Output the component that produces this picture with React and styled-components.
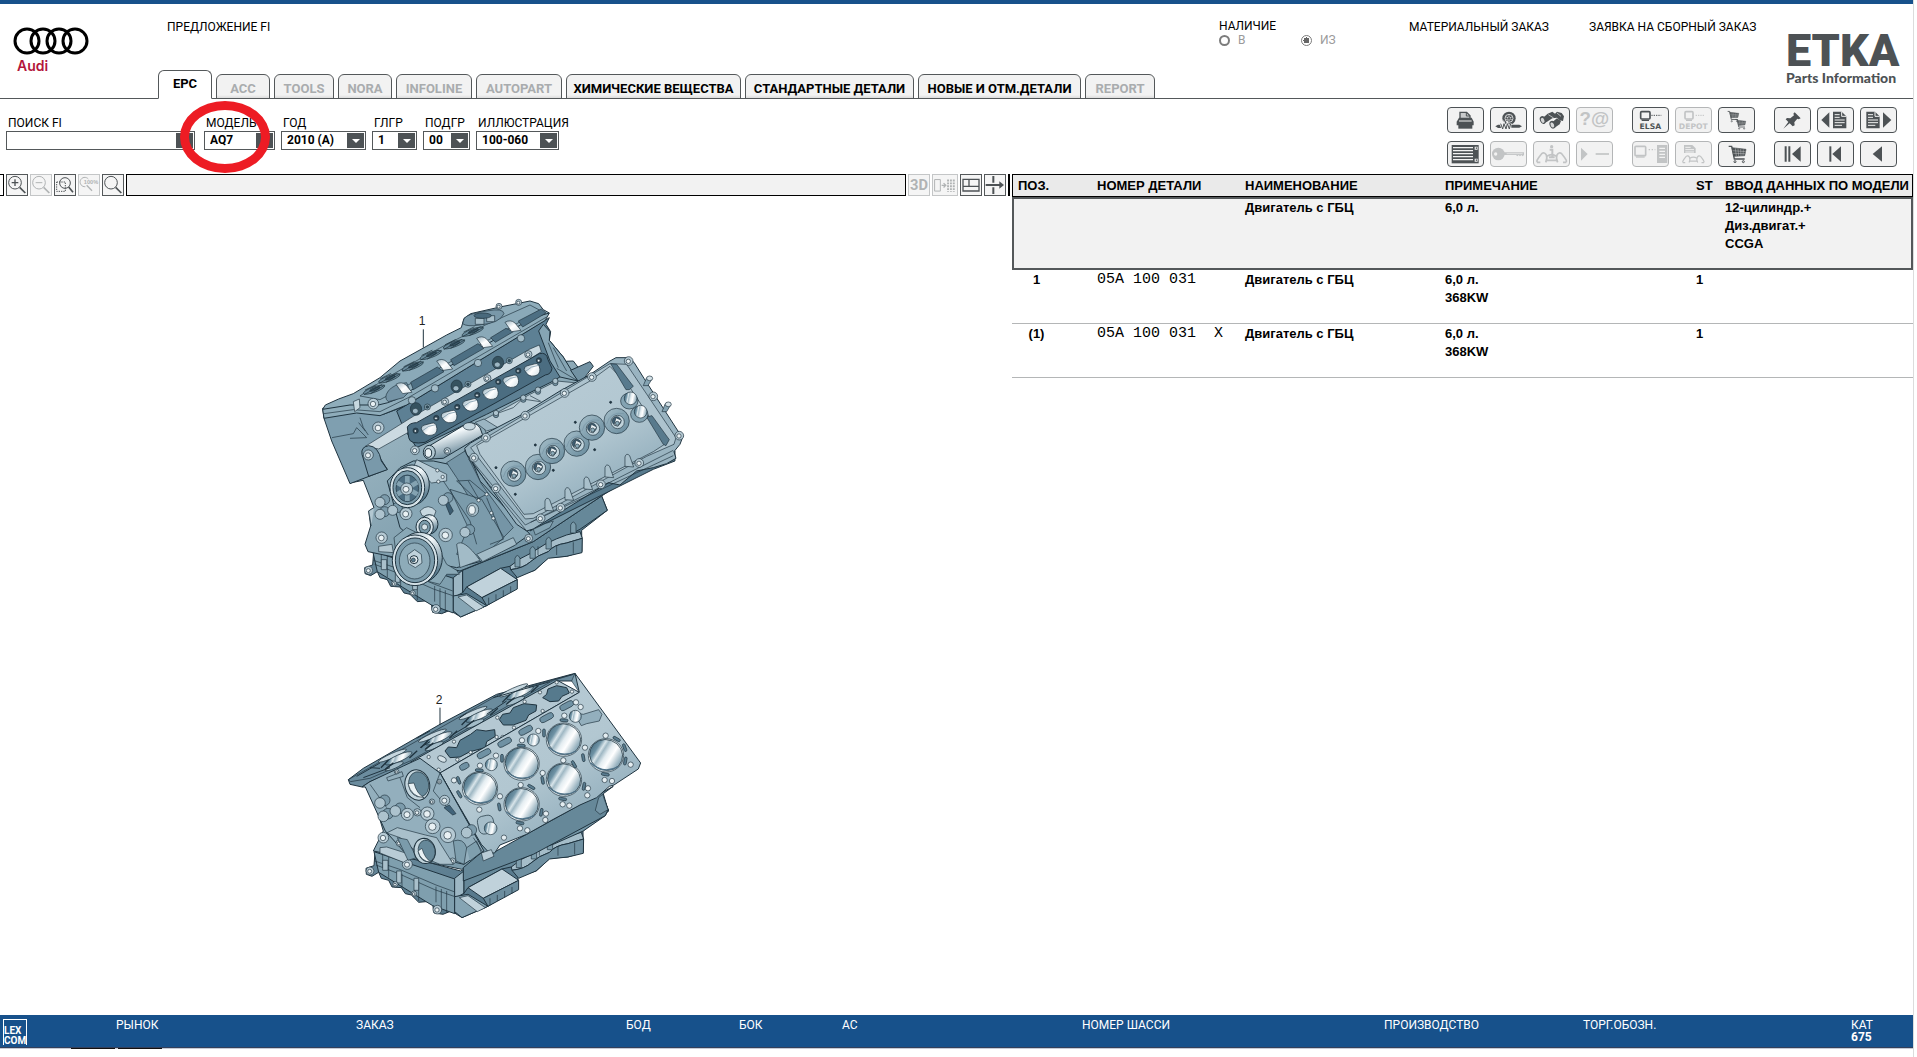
import React, { useState } from 'react';
import styled, { createGlobalStyle, css } from 'styled-components';

const tabs = [
  { name: "EPC", width: 54 },
  { name: "ACC", width: 54, disabled: true },
  { name: "TOOLS", width: 60, disabled: true },
  { name: "NORA", width: 54, disabled: true },
  { name: "INFOLINE", width: 76, disabled: true },
  { name: "AUTOPART", width: 86, disabled: true },
  { name: "ХИМИЧЕСКИЕ ВЕЩЕСТВА", width: 175 },
  { name: "СТАНДАРТНЫЕ ДЕТАЛИ", width: 169 },
  { name: "НОВЫЕ И ОТМ.ДЕТАЛИ", width: 163 },
  { name: "REPORT", width: 70, disabled: true },
];

const filters = [
  { id: "model", label: "МОДЕЛЬ", value: "AQ7", width: 71, marked: true },
  { id: "year", label: "ГОД", value: "2010 (A)", width: 85 },
  { id: "group", label: "ГЛГР", value: "1", width: 45 },
  { id: "subgroup", label: "ПОДГР", value: "00", width: 47 },
  { id: "picture", label: "ИЛЛЮСТРАЦИЯ", value: "100-060", width: 83 },
];

const parts = [
  { pos: "", number: "", name: "Двигатель с ГБЦ", note: ["6,0 л."], st: "", model: ["12-цилиндр.+", "Диз.двигат.+", "CCGA"] },
  { pos: "1", number: "05A 100 031", name: "Двигатель с ГБЦ", note: ["6,0 л.", "368KW"], st: "1", model: [] },
  { pos: "(1)", number: "05A 100 031  X", name: "Двигатель с ГБЦ", note: ["6,0 л.", "368KW"], st: "1", model: [] },
];

const footerItems = ["РЫНОК", "ЗАКАЗ", "БОД", "БОК", "АС", "НОМЕР ШАССИ", "ПРОИЗВОДСТВО", "ТОРГ.ОБОЗН."];

const IconText = styled.text`
  fill: currentColor;
  text-anchor: middle;
  font-family: ${(props) => (props.$wide ? '"DejaVu Sans"' : props.$narrow ? 'Roboto' : '"Liberation Sans"')}, sans-serif;
  font-size: ${(props) => props.$size}px;
  font-weight: bold;
`;

/* ---------- toolbar icons, drawn on a 111 x 78 grid ---------- */

const Doc = ({ x = 0, y = 0 }) => (
  <g transform={`translate(${x} ${y})`}>
    <path d="M0 0H26L40 14V50H0Z" fill="currentColor" />
    <path d="M26 0V14H40" fill="none" stroke="#f2f2f2" strokeWidth="3" />
    <path d="M5 9H20M5 17H20M5 25H35M5 33H35M5 41H27" stroke="#f2f2f2" strokeWidth="3" />
  </g>
);

const Cart = ({ x = 0, y = 0, s = 1 }) => (
  <g transform={`translate(${x} ${y}) scale(${s})`} fill="none" stroke="currentColor">
    <path d="M0 2H9L17 40H48" strokeWidth="4" />
    <path d="M10 6L52 11L48 30L16 32Z" fill="currentColor" strokeWidth="2" />
    <path d="M20 8L23 31M28 9L30 31M36 10L37 31M44 11L43 30M12 15L51 18M14 23L49 24" stroke="#f2f2f2" strokeWidth="1" />
    <circle cx="19" cy="48" r="3" strokeWidth="3" />
    <circle cx="44" cy="48" r="3" strokeWidth="3" />
  </g>
);

const Screen = ({ x, y, w = 28, h = 22 }) => (
  <g transform={`translate(${x} ${y})`}>
    <rect x="2" y="2" width={w} height={h} rx="3" fill="none" stroke="currentColor" strokeWidth="5" />
    <path d={`M5 ${h + 6}H${w - 1}`} stroke="currentColor" strokeWidth="4" />
  </g>
);

const Hands = ({ x = 0, y = 0, s = 1 }) => (
  <g transform={`translate(${x} ${y}) scale(${s})`} fill="none" stroke="currentColor" strokeWidth="5">
    <path d="M2 40V34Q6 26 16 14Q24 8 30 18Q34 28 28 40" />
    <path d="M90 40V34Q86 26 76 14Q68 8 62 18Q58 28 64 40" />
    <path d="M2 40H12M80 40H90M31 22Q46 12 61 22M30 34H62" />
  </g>
);

const icons = {
  print: (
    <>
      <path d="M39 16H59L69 26V36H39Z" fill="#c9cbcc" stroke="currentColor" strokeWidth="4" />
      <path d="M58 16V27H69" fill="none" stroke="currentColor" strokeWidth="3" />
      <path d="M29 44L36 32H74L80 44V55H29Z" fill="currentColor" />
      <path d="M36 42H74" stroke="#f2f2f2" strokeWidth="3" />
      <path d="M34 52H76V65H34Z" fill="currentColor" />
    </>
  ),
  wheel: (
    <>
      <circle cx="57" cy="34" r="20" fill="currentColor" />
      <circle cx="57" cy="34" r="12" fill="none" stroke="#d5d6d7" strokeWidth="3" />
      <path d="M57 25V43M49 30L65 38M49 38L65 30" stroke="#d5d6d7" strokeWidth="3" />
      <circle cx="57" cy="34" r="3" fill="currentColor" />
      <path d="M16 58L24 53H34V63H24Z" fill="currentColor" />
      <path d="M32 50L38 66L42 50L48 66L52 50L58 66L62 50L66 66" fill="none" stroke="#f2f2f2" strokeWidth="7" />
      <path d="M32 50L38 66L42 50L48 66L52 50L58 66L62 50" fill="none" stroke="currentColor" strokeWidth="3" />
      <path d="M64 53H88L96 58L88 62H64Z" fill="currentColor" />
    </>
  ),
  find: (
    <>
      <path d="M44 20L58 14L66 20L72 14L86 18L93 28L90 42L80 40L72 32L58 34L40 46L30 32Z" fill="currentColor" />
      <path d="M52 50L72 34L84 42L80 52L68 60Z" fill="currentColor" />
      <ellipse cx="30" cy="39" rx="9" ry="12" transform="rotate(-24 30 39)" fill="currentColor" />
      <ellipse cx="29" cy="40" rx="5" ry="8" transform="rotate(-24 29 40)" fill="#d5d6d7" />
      <ellipse cx="59" cy="53" rx="9" ry="12" transform="rotate(-24 59 53)" fill="currentColor" />
      <ellipse cx="58" cy="54" rx="5" ry="8" transform="rotate(-24 58 54)" fill="#d5d6d7" />
      <path d="M46 23L62 33M72 18L84 28" stroke="#f2f2f2" strokeWidth="2" />
    </>
  ),
  mail: <IconText x="55" y="55" $size={56}>?@</IconText>,
  elsa: (
    <>
      <Screen x={24} y={12} />
      <path d="M58 25H88" stroke="currentColor" strokeWidth="3" strokeDasharray="4 3" />
      <IconText x="55" y="66" $size={23} $wide>ELSA</IconText>
    </>
  ),
  depot: (
    <>
      <Screen x={28} y={12} w={24} />
      <path d="M62 25H88" stroke="currentColor" strokeWidth="3" strokeDasharray="4 3" />
      <IconText x="55" y="66" $size={23} $wide>DEPOT</IconText>
    </>
  ),
  carts: (
    <>
      <Cart x={29} y={12} s={0.64} />
      <Cart x={52} y={36} s={0.6} />
    </>
  ),
  pin: (
    <path d="M62 16L80 34L74 37L70 35L61 46L62 55L56 58L47 49L28 65L43 45L35 37L39 33L49 34L60 25L58 20Z" fill="currentColor" />
  ),
  docPrev: (
    <>
      <path d="M37 16V62L13 39Z" fill="currentColor" />
      <Doc x={48} y={14} />
    </>
  ),
  docNext: (
    <>
      <Doc x={19} y={14} />
      <path d="M69 16V62L94 39Z" fill="currentColor" />
    </>
  ),
  list: (
    <>
      <path d="M14 12H95V67H14Z" fill="currentColor" />
      <path d="M18 20H78M18 29H78M18 38H78M18 47H78M18 56H78" stroke="#f2f2f2" strokeWidth="4" />
      <path d="M83 17H92V26H83ZM83 53H92V62H83Z" fill="#f2f2f2" />
      <path d="M88 19V24M88 55V60" stroke="currentColor" strokeWidth="3" />
    </>
  ),
  key: (
    <>
      <circle cx="25" cy="39" r="19" fill="currentColor" />
      <circle cx="17" cy="39" r="5" fill="#f2f2f2" />
      <path d="M42 34H102V42L98 46L94 42L90 46L86 42L82 46L78 42H42Z" fill="currentColor" />
      <path d="M50 38H98" stroke="#f2f2f2" strokeWidth="2" />
    </>
  ),
  info: (
    <>
      <Hands x={10} y={24} />
      <circle cx="56" cy="17" r="5" fill="currentColor" />
      <path d="M50 26H58V48M48 49H65" fill="none" stroke="currentColor" strokeWidth="6" />
    </>
  ),
  expand: (
    <>
      <path d="M15 20V59L35 39Z" fill="currentColor" />
      <path d="M59 39H99" stroke="currentColor" strokeWidth="5" />
    </>
  ),
  server: (
    <>
      <Screen x={7} y={14} w={32} h={28} />
      <path d="M50 26H70" stroke="currentColor" strokeWidth="4" strokeDasharray="4 5" />
      <path d="M75 12H106V66H75Z" fill="currentColor" />
      <path d="M82 22H99M82 31H99M82 40H99M82 49H99" stroke="#f2f2f2" strokeWidth="4" />
    </>
  ),
  docCar: (
    <>
      <path d="M27 12H52L62 22V36H27Z" fill="currentColor" />
      <path d="M31 19H47M31 26H57M31 33H57" stroke="#f2f2f2" strokeWidth="3" />
      <Hands x={22} y={36} s={0.72} />
    </>
  ),
  cart: <Cart x={32} y={14} />,
  first: (
    <>
      <path d="M35 16V62M46 16V62" stroke="currentColor" strokeWidth="6" />
      <path d="M80 16V62L54 39Z" fill="currentColor" />
    </>
  ),
  prev: (
    <>
      <path d="M40 16V62" stroke="currentColor" strokeWidth="6" />
      <path d="M72 16V62L46 39Z" fill="currentColor" />
    </>
  ),
  back: <path d="M66 16V62L38 39Z" fill="currentColor" />,
};

const toolGroups = [
  [
    ["print", "Печать"], ["wheel", "Колёса"], ["find", "Поиск"], ["mail", "Запрос", true],
    ["list", "Список"], ["key", "Ключ", true], ["info", "Информация", true], ["expand", "Развернуть", true],
  ],
  [
    ["elsa", "ELSA"], ["depot", "DEPOT", true], ["carts", "Корзины"],
    ["server", "Сервер", true], ["docCar", "Документ", true], ["cart", "Корзина"],
  ],
  [
    ["pin", "Закрепить"], ["docPrev", "Предыдущий документ"], ["docNext", "Следующий документ"],
    ["first", "В начало"], ["prev", "Предыдущий"], ["back", "Назад"],
  ],
];

/* ---------- viewer icons, 66 x 66 grid ---------- */

const Lens = ({ children }) => (
  <g fill="none" stroke="currentColor">
    <circle cx="27" cy="26" r="19" strokeWidth="3" />
    <path d="M41 40L58 57" strokeWidth="5" />
    {children}
  </g>
);

const viewIcons = {
  zoomIn: <Lens><path d="M17 26H37M27 16V36" strokeWidth="4" /></Lens>,
  zoomOut: <Lens><path d="M17 26H37" strokeWidth="3" /></Lens>,
  zoomArea: (
    <g fill="none" stroke="currentColor">
      <path d="M8 24H34V52H8Z" strokeWidth="3" strokeDasharray="4 3" />
      <circle cx="33" cy="27" r="16" strokeWidth="3" />
      <path d="M44 39L57 55" strokeWidth="5" />
    </g>
  ),
  zoomFull: (
    <g fill="none" stroke="currentColor">
      <path d="M22 38A14 14 0 1 1 31 15" strokeWidth="3" />
      <path d="M26 34L42 50" strokeWidth="4" />
      <IconText x="39" y="31" $size={17} stroke="none">100%</IconText>
    </g>
  ),
  zoom: <Lens />,
  three: <IconText x="33" y="49" $size={44} $narrow>3D</IconText>,
  split: (
    <g fill="none" stroke="currentColor">
      <path d="M8 16H26V52H8Z" strokeWidth="3" />
      <path d="M30 34H42M36 27L43 34L36 41" strokeWidth="4" />
      <path d="M50 16V54M59 16V54M68 16V54" strokeWidth="6" strokeDasharray="6 3" />
    </g>
  ),
  panes: <path d="M9 16H57V51H9ZM9 37H57M27 16V37" fill="none" stroke="currentColor" strokeWidth="4" />,
  move: (
    <g stroke="currentColor" fill="currentColor">
      <path d="M28 6V26M28 40V60" strokeWidth="6" />
      <path d="M5 33H48" strokeWidth="6" />
      <path d="M46 22L60 33L46 44Z" stroke="none" />
    </g>
  ),
};

const ViewButton = ({ icon, title, disabled, wide }) => (
  <SquareButton type="button" aria-label={title} disabled={disabled} $wide={wide}>
    <svg viewBox={wide ? "3 3 75 60" : "3 3 60 60"}>{viewIcons[icon]}</svg>
  </SquareButton>
);

/* ---------- engine drawings ---------- */

const ink = "#1f333f";

const Gradients = () => (
  <defs>
    <linearGradient id="metal" x1="0" y1="0.1" x2="1" y2="0.3">
      <stop offset="0" stopColor="#466a7e" />
      <stop offset="0.22" stopColor="#6f93a5" />
      <stop offset="0.34" stopColor="#d9e5ea" />
      <stop offset="0.42" stopColor="#9fb8c4" />
      <stop offset="0.56" stopColor="#e4edf1" />
      <stop offset="0.72" stopColor="#ffffff" />
      <stop offset="1" stopColor="#8facba" />
    </linearGradient>
    <linearGradient id="port" x1="0" y1="0" x2="1" y2="1">
      <stop offset="0" stopColor="#9bb5c2" />
      <stop offset="0.5" stopColor="#ffffff" />
      <stop offset="1" stopColor="#d3e0e6" />
    </linearGradient>
    <linearGradient id="tube" x1="0" y1="0" x2="0.5" y2="1">
      <stop offset="0" stopColor="#8eacba" />
      <stop offset="0.4" stopColor="#f5fafc" />
      <stop offset="1" stopColor="#56798c" />
    </linearGradient>
    <linearGradient id="panel" x1="0.1" y1="0" x2="0.8" y2="1">
      <stop offset="0" stopColor="#b9ccd6" />
      <stop offset="0.55" stopColor="#b2c7d1" />
      <stop offset="1" stopColor="#86a5b5" />
    </linearGradient>
    <linearGradient id="side" x1="0" y1="0" x2="1" y2="1">
      <stop offset="0" stopColor="#a5bec9" />
      <stop offset="1" stopColor="#66899b" />
    </linearGradient>
    <linearGradient id="dark" x1="0" y1="0" x2="1" y2="1">
      <stop offset="0" stopColor="#7293a4" />
      <stop offset="1" stopColor="#496b7f" />
    </linearGradient>
  </defs>
);

const Boss = ({ x, y, r = 12, fill = "#b6cad4" }) => (
  <g>
    <circle cx={x} cy={y} r={r} fill={fill} stroke={ink} strokeWidth="2" />
    <circle cx={x - 1} cy={y + 1} r={r * 0.5} fill="#e9f1f4" stroke={ink} strokeWidth="2" />
  </g>
);

const Knob = ({ x, y, r = 15, dx = 14, dy = -8 }) => (
  <g stroke={ink} strokeWidth="2">
    <circle cx={x + dx} cy={y + dy} r={r} fill="#7c9bab" />
    <circle cx={x} cy={y} r={r} fill="#adc3ce" />
  </g>
);

// The crankcase and its sump are the same casting on both drawings.
const Sump = () => (
  <g stroke={ink} strokeWidth="3" strokeLinejoin="round">
    <path d="M222 800L478 868L700 770L905 645L922 688L845 748L846 812L800 826L745 830L705 868L650 884V918L560 974L482 1008L450 988L425 998L398 994L394 968L375 960L352 962L330 940L312 936L300 918L272 916L262 896L240 890L232 872L212 884L195 878L194 860L218 852Z" fill="url(#dark)" />
    <path d="M218 810L460 892V996L394 972L232 872Z" fill="#7f9fae" />
    <path d="M460 890L488 868V935L460 950Z" fill="#9db7c4" />
    <path d="M488 868L700 782L905 645L922 688L840 745L630 856L602 862L500 918L488 935Z" fill="#668899" />
    <path d="M500 918L602 862L652 896L546 950Z" fill="#c0d2db" />
    <path d="M546 950L652 896V924L560 974Z" fill="#6c8d9e" />
    <path d="M460 945L500 938L560 974L482 1008L460 990Z" fill="#86a5b4" />
    <path d="M474 948L500 942L552 978L528 990Z" fill="#c0d2db" strokeWidth="2" />
    <path d="M566 950V970M588 940V958M610 928V948M632 916V936" strokeWidth="2" />
    <path d="M630 856Q660 830 690 818L735 790Q770 772 800 762L840 752L847 772L800 786Q760 792 745 812Q710 824 692 842Q670 862 632 866Z" fill="#a5bdc9" />
    <path d="M632 866Q670 862 692 842Q710 824 745 812Q760 792 800 786L847 772L846 815L800 826L745 832L704 868L652 890Z" fill="#6f90a1" />
    <path d="M645 832Q652 815 660 832V858H645ZM690 806Q698 788 706 806V832H690ZM738 778Q746 760 754 778V804H738ZM812 732Q820 714 828 732V756H812Z" fill="#7d9dac" strokeWidth="2" />
    <path d="M220 838L292 862L404 910L458 930M224 850L292 876L400 924L458 944" fill="none" strokeWidth="2" />
    <path d="M244 816V858M262 824V888M288 872V910M302 876V918M340 896V940M352 900V958M404 915V962M420 922V990M436 928V994" fill="none" strokeWidth="2" />
    <path d="M244 836h16v30h-16zM286 868h14v36h-14zM338 890h14v36h-14z" fill="#a9c0cb" strokeWidth="2" />
    <path d="M714 796V822M770 794V822M820 784V818" strokeWidth="2" />
    <Boss x={206} y={868} r={12} />
    <Boss x={408} y={984} r={13} />
    <Boss x={282} y={908} r={8} />
    <Boss x={338} y={936} r={8} />
  </g>
);

const Port = ({ x, y }) => (
  <g transform={`translate(${x} ${y}) rotate(-14)`} stroke={ink} strokeWidth="2">
    <path d="M-23 -8Q-22 -17 -12 -17H12Q23 -17 23 -6V2Q20 18 4 18Q-18 18 -23 -8Z" fill="url(#port)" />
    <path d="M-20 -2Q0 -14 21 -10" fill="none" stroke="#6f90a1" />
  </g>
);

const Well = ({ x, y }) => (
  <g stroke={ink} strokeWidth="2">
    <circle cx={x} cy={y} r="38" fill="url(#side)" />
    <path d={`M${x - 30} ${y + 10}Q${x - 20} ${y - 30} ${x + 22} ${y - 22}`} fill="none" stroke="#7493a3" />
    <circle cx={x + 3} cy={y + 3} r="20" fill="#c2d4dc" />
    <circle cx={x} cy={y} r="13" fill="#3d5d71" />
    <path d={`M${x - 2} ${y - 10}L${x + 14} ${y - 2}L${x + 4} ${y + 16}L${x - 8} ${y + 12}Z`} fill="#edf4f7" />
    <circle cx={x + 2} cy={y + 7} r="6" fill="#8cabb9" />
  </g>
);

const Pulley = ({ x, y, rx, ry }) => (
  <g stroke={ink} strokeWidth="3">
    <ellipse cx={x + 14} cy={y - 8} rx={rx} ry={ry} fill="url(#tube)" />
    <ellipse cx={x} cy={y} rx={rx} ry={ry} fill="#d5e2e8" />
    <ellipse cx={x} cy={y} rx={rx - 9} ry={ry - 9} fill="#7b9bab" />
  </g>
);

const FullEngine = () => (
  <g transform="scale(0.3333)" stroke={ink} strokeWidth="3" strokeLinejoin="round">
    <Sump />
    {/* block body behind both banks */}
    <path d="M150 606L190 598L222 680L206 690L212 735L195 790L204 812L480 870L700 782L905 645L960 610L1060 560L820 240L560 250L250 400Z" fill="url(#side)" />
    {/* left bank */}
    <path d="M68 382L150 350L250 400L330 370L332 440L215 492L262 565L150 608L95 480L72 412Z" fill="#7f9fb0" />
    <path d="M96 470L160 458L170 440L200 470L150 472" fill="none" strokeWidth="2" />
    <path d="M180 410L190 440L205 462M176 425L196 450" fill="none" strokeWidth="2" />
    <path d="M290 390L748 110L738 130L752 152L748 178L790 228L812 268L760 300L560 400L350 500L310 440Z" fill="#5d8094" />
    <path d="M730 130L750 152L748 178L790 228L834 300L780 288L750 240L716 150Z" fill="#86a5b4" />
    <path d="M745 185L775 260M760 200L800 270M770 262L834 300" fill="none" strokeWidth="2" />
    <path d="M68 385L76 372L116 354L160 338L240 290L300 240L372 200L440 162L484 140L492 112L512 98L600 78L650 68L690 60L716 68L730 86L748 96L736 118L500 262L320 372L240 404L170 396L72 412Z" fill="#8fadbb" />
    <path d="M68 385L150 372L235 372Q290 362 330 330L500 224L700 110L748 96" fill="none" />
    <path d="M72 398L160 386L240 392L325 350L502 246L740 108" fill="none" strokeWidth="2" />
    <path d="M180 345L245 300L330 250L440 190L560 130L690 72L720 88L560 180L400 272L290 330L240 356Z" fill="#8aa9b8" strokeWidth="2" />
    <path d="M265 330Q280 310 320 305L330 330L310 350L265 362Q250 350 265 330Z" fill="#7493a5" strokeWidth="2" />
    <path d="M332 304L412 258L432 272L340 326ZM452 236L534 188L552 202L462 254ZM572 170L618 142L640 152L586 184ZM655 120L724 84L738 96L668 138Z" fill="#4d6f83" strokeWidth="2" />
    {[[310, 320], [432, 250], [552, 182], [637, 134]].map(([x, y]) => (
      <path key={x} d={`M${x - 22} ${y - 10}Q${x - 6} ${y - 20} ${x + 8} ${y - 8}L${x + 26} ${y + 14}L${x - 2} ${y + 18}Z`} fill="url(#port)" strokeWidth="2" />
    ))}
    {[[222, 326], [268, 292], [338, 256], [392, 222], [462, 190], [518, 152]].map(([x, y]) => (
      <g key={x} transform={`translate(${x} ${y}) rotate(-20)`} strokeWidth="2">
        <ellipse rx="34" ry="8" fill="#6b8c9d" />
        <ellipse cx="3" cy="-1" rx="16" ry="4" fill="#3b596a" />
        <path d="M-34 4L28 -6M-14 8L36 -2M-26 -8L10 -12" />
      </g>
    ))}
    <path d="M492 114Q500 98 560 90Q610 80 612 98Q600 126 540 132Q500 138 488 128Z" fill="#7998a9" strokeWidth="2" />
    <path d="M526 112H552V130H526ZM560 104H584V122H560Z" fill="#a8bfca" strokeWidth="2" />
    <ellipse cx="548" cy="104" rx="26" ry="8" fill="#49697c" strokeWidth="2" />
    <Boss x={597} y={76} r={9} />
    <Boss x={656} y={64} r={9} />
    <path d="M160 362L178 354L180 380L164 392Z" fill="#c7d8e0" strokeWidth="2" />
    <Boss x={220} y={368} r={16} />
    <Boss x={235} y={440} r={17} />
    {/* rail and inlet plate */}
    <path d="M196 496L340 406L690 204L718 192L724 212L690 234L350 440L236 504Z" fill="#cbdae1" strokeWidth="2" />
    <path d="M186 520Q182 498 206 494Q236 496 244 540L262 566L206 586Z" fill="#7999aa" />
    <Boss x={205} y={522} r={15} />
    <path d="M322 438Q330 425 350 425L718 218Q740 212 744 236L756 262Q754 280 736 282L375 484Q330 492 326 470Z" fill="#4b6d81" />
    {[[388, 446], [448, 408], [512, 373], [572, 338], [633, 302], [697, 268]].map(([x, y]) => <Port key={x} x={x} y={y} />)}
    {[[347, 449], [409, 411], [472, 378], [532, 342], [595, 302], [655, 269], [717, 238]].map(([x, y]) => <Boss key={x} x={x} y={y} r={8} fill="#2d4655" />)}
    {[[435, 362], [562, 292], [685, 220]].map(([x, y]) => <Boss key={x} x={x} y={y} r={11} />)}
    {[[336, 358], [405, 322], [534, 246], [663, 172]].map(([x, y]) => <circle key={x} cx={x} cy={y} r="11" fill="#a3bcc8" strokeWidth="2" />)}
    {[[348, 384], [470, 316], [594, 245]].map(([x, y]) => (
      <g key={x} strokeWidth="2">
        <ellipse cx={x} cy={y} rx="17" ry="19" fill="#35525f" />
        <ellipse cx={x - 2} cy={y + 6} rx="9" ry="8" fill="#9db7c4" />
        <circle cx={x + 34} cy={y - 6} r="9" fill="#88a7b5" />
        <circle cx={x + 34} cy={y - 6} r="4" fill="#35525f" />
      </g>
    ))}
    {/* valley */}
    <path d="M545 420L590 396L690 340L770 300L832 306L860 318L700 400L590 450L560 460Z" fill="#b9ccd6" strokeWidth="2" />
    <path d="M812 268L870 242L880 256L846 300L834 300Z" fill="#7292a3" />
    <path d="M590 398L640 380L668 354L720 362M690 344L724 362" fill="none" strokeWidth="2" />
    {[[588, 396], [670, 350], [714, 326], [766, 300]].map(([x, y]) => <Knob key={x} x={x} y={y} r={8} dx={0} dy={6} />)}
    <path d="M376 502L500 428Q524 420 540 440L548 462L430 532L388 534Z" fill="url(#tube)" />
    <ellipse cx="388" cy="514" rx="18" ry="21" fill="#b3c8d2" />
    <ellipse cx="385" cy="516" rx="10" ry="13" fill="#e9f1f4" />
    <ellipse cx="508" cy="436" rx="18" ry="11" fill="#c6d7df" strokeWidth="2" />
    <path d="M526 424L552 414L594 440L560 450Z" fill="#9bb5c2" strokeWidth="2" />
    <Boss x={345} y={508} r={13} />
    <Boss x={442} y={510} r={10} />
    {/* front cover */}
    <path d="M340 540L400 540L470 555L500 500L540 600L690 760L640 795L540 842L470 860L420 850L300 740L262 600L300 560Z" fill="#88a7b6" />
    <path d="M350 536L440 580L440 600L395 606L340 560Z" fill="#b7cbd5" strokeWidth="2" />
    <path d="M440 545L495 510L545 610L640 740L600 780L540 700L470 590Z" fill="#7595a6" strokeWidth="2" />
    <path d="M450 625L545 655L612 770L540 832L470 820L505 740Z" fill="#7b9bab" strokeWidth="2" />
    <path d="M470 600L530 655L560 640L510 598ZM505 600L540 660M430 600L510 720L530 790M560 650L610 775L570 790" fill="none" strokeWidth="2" />
    <path d="M436 668L446 664L460 690L450 702Z" fill="#3d5d71" strokeWidth="2" />
    <ellipse cx="518" cy="686" rx="18" ry="20" fill="#a8bfca" strokeWidth="2" />
    <ellipse cx="516" cy="687" rx="10" ry="13" fill="#e9f1f4" strokeWidth="2" />
    <path d="M530 820L640 770L650 790L548 842ZM470 790Q490 770 540 838L480 860Z" fill="#a2bbc7" strokeWidth="2" />
    {[[412, 568], [428, 588], [415, 602], [560, 640], [536, 658], [574, 696], [580, 712]].map(([x, y]) => <circle key={`${x}-${y}`} cx={x} cy={y} r="5" fill="#e3edf1" strokeWidth="2" />)}
    {/* right bank */}
    <path d="M690 750L1060 565L1125 540V510L1050 540L700 722Z" fill="#587b8e" />
    <path d="M494 502L512 486L540 470L560 456L660 404L780 330L868 282L930 240L948 230L985 230L1002 244L1032 292L1134 450L1150 464L1140 490L1122 512L1128 532L1100 548L1060 560L1010 570L960 612L925 605L700 744L680 750L650 730L500 520Z" fill="#9ab4c1" />
    <path d="M512 500L545 478L930 248L980 250L1128 470L1122 490L1040 526L700 712L676 714Z" fill="#adc3ce" strokeWidth="2" />
    <path d="M530 494L870 300L930 256L990 320L1100 486L1060 512L700 698L672 700L540 520Z" fill="url(#panel)" strokeWidth="2" />
    <path d="M932 248L950 250L1000 316L988 326H978ZM1040 408L1056 404L1108 476L1098 494L1090 490Z" fill="#587a8d" strokeWidth="2" />
    <path d="M500 520L676 732L1120 508M506 535L680 750M692 724L1120 524" fill="none" strokeWidth="2" />
    {[[640, 578], [714, 558], [756, 510], [830, 488], [876, 440], [950, 420]].map(([x, y]) => <Well key={x} x={x} y={y} />)}
    {[[992, 352], [1022, 392]].map(([x, y]) => (
      <g key={x} strokeWidth="2">
        <ellipse cx={x - 4} cy={y + 8} rx="26" ry="24" fill="#84a3b2" />
        <circle cx={x} cy={y} r="19" fill="url(#metal)" />
      </g>
    ))}
    {[[745, 668], [805, 636], [862, 604], [925, 568], [985, 536]].map(([x, y]) => (
      <path key={x} d={`M${x - 10} ${y + 20}V${y - 8}Q${x - 6} ${y - 22} ${x + 4} ${y - 12}L${x + 16} ${y + 22}Z`} fill="#a9c0cb" strokeWidth="2" />
    ))}
    {[[558, 470], [676, 404], [794, 336], [876, 288], [522, 530], [588, 622], [722, 712], [782, 680], [903, 610], [1018, 546], [1138, 464], [1060, 346], [986, 240]].map(([x, y]) => <Boss key={x} x={x} y={y} r={13} />)}
    {[[588, 560], [646, 640], [706, 492], [760, 568], [826, 424], [884, 506], [932, 364]].map(([x, y]) => <circle key={x} cx={x} cy={y} r="3" fill={ink} />)}
    {[[1042, 300], [1098, 378]].map(([x, y]) => (
      <g key={x} strokeWidth="2">
        <path d={`M${x - 12} ${y + 14}L${x - 2} ${y - 10}L${x + 14} ${y - 6}L${x + 2} ${y + 14}Z`} fill="#84a3b2" />
        <ellipse cx={x + 7} cy={y - 8} rx="9" ry="7" fill="#d5e2e8" />
      </g>
    ))}
    <Boss x={686} y={772} r={12} />
    <path d="M700 745L735 728L760 720L750 740L706 762Z" fill="#84a3b2" strokeWidth="2" />
    {/* drives */}
    {[[240, 664], [240, 700], [278, 688], [495, 754], [430, 658]].map(([x, y]) => <Knob key={`${x}-${y}`} x={x} y={y} r={15} />)}
    <Boss x={318} y={698} r={18} />
    <Boss x={437} y={762} r={20} />
    <Boss x={245} y={770} r={17} />
    <path d="M360 690Q385 664 408 690L400 712L366 704Z" fill="#c7d8e0" strokeWidth="2" />
    <Pulley x={322} y={620} rx={52} ry={60} />
    <ellipse cx="322" cy="622" rx="34" ry="40" fill="#4b6c80" strokeWidth="2" />
    <path d="M322 585V660M292 605L352 640M292 640L352 604" stroke="#84a3b2" strokeWidth="14" />
    <circle cx="320" cy="624" r="18" fill="#b6cad4" strokeWidth="2" />
    <circle cx="318" cy="625" r="9" fill="#e9f1f4" strokeWidth="2" />
    <Pulley x={374} y={738} rx={26} ry={29} />
    <circle cx="374" cy="738" r="9" fill="#d5e2e8" strokeWidth="2" />
    <path d="M282 770L320 740L380 770L420 812L440 850L470 868L478 880L440 880L420 910L340 890L292 850Z" fill="#89a8b6" strokeWidth="2" />
    <Pulley x={345} y={838} rx={68} ry={76} />
    <ellipse cx="344" cy="840" rx="46" ry="54" fill="#8dabb9" strokeWidth="2" />
    <path d="M322 822L344 806L364 820L366 846L346 860L326 848Z" fill="#c0d2db" strokeWidth="2" />
    <circle cx="342" cy="836" r="12" fill="#e9f1f4" />
    <circle cx="340" cy="837" r="6" fill="#5b7d90" strokeWidth="2" />
    <path d="M222 680L206 690L214 735M236 796L276 790L280 815L236 812Z" fill="#b3c8d2" strokeWidth="2" />
    <path d="M370 145V200" strokeWidth="3" />
  </g>
);

const bores = [[480, 412], [605, 338], [732, 266], [605, 460], [732, 386], [858, 313]];

const BareBlock = () => (
  <g transform="translate(20 370) scale(0.3333)" stroke={ink} strokeWidth="3" strokeLinejoin="round">
    <g transform="translate(-56 -208)"><Sump /></g>
    <path d="M136 405L260 325L360 365L510 606L700 560L848 430L864 476L856 494L790 540L700 580L425 655L160 600L190 540L172 480Z" fill="url(#side)" />
    <path d="M485 604L520 605L880 406L850 428L864 476L856 494L640 610L430 690V650Z" fill="#668899" />
    <path d="M836 440L848 430L864 476L840 490L826 478Z" fill="#7595a6" strokeWidth="2" />
    {/* far bank */}
    <path d="M85 386L130 352L360 220L530 130L765 67L770 90L712 90L280 335L250 350L150 392L126 408L90 400Z" fill="#6b8c9e" />
    <path d="M85 386L535 132L760 70L700 88L270 330L150 382L92 392Z" fill="none" strokeWidth="2" />
    {[[236, 322], [356, 262], [478, 194], [600, 126]].map(([x, y]) => (
      <g key={x} transform={`translate(${x} ${y}) rotate(-24)`} strokeWidth="2">
        <ellipse cx="-14" cy="-15" rx="46" ry="7" fill="#c6d7df" />
        <ellipse rx="44" ry="10" fill="url(#metal)" />
        <ellipse cx="-22" cy="16" rx="30" ry="7" fill="#a3bcc8" />
        <path d="M-60 4L-30 -8M30 12L60 2M-50 14L-20 6" fill="none" strokeWidth="4" />
      </g>
    ))}
    <path d="M110 376L180 336M130 380L210 350M290 262L330 240M300 290L330 272M420 200L440 186M520 140L690 92M150 350L180 352M400 250L440 226M500 190L560 150" fill="none" strokeWidth="3" />
    <path d="M765 67L755 90L778 124L800 118" fill="#86a5b4" strokeWidth="2" />
    {/* valley */}
    <path d="M272 333L712 88L778 124L360 366Z" fill="#b4c8d2" />
    <path d="M375 300L385 288L410 290L420 268L452 250L470 236L498 240L524 236L526 256L500 272L496 290L450 302L420 318L390 320Z" fill="#567a8d" />
    <path d="M538 206L548 190L570 186L580 170L612 158L650 162L648 180L626 192L618 208L580 222L550 222Z" fill="#567a8d" />
    <path d="M668 140L680 130L684 114L710 104L740 110L748 126L726 136L716 150L690 152Z" fill="#567a8d" />
    {[[326, 318], [356, 356], [402, 272], [452, 304], [530, 258], [548, 258], [532, 200], [614, 152], [668, 180], [660, 124], [710, 94], [756, 122], [582, 230], [412, 326]].map(([x, y]) => <circle key={`${x}-${y}`} cx={x} cy={y} r="5" fill="#e9f1f4" strokeWidth="2" />)}
    <ellipse cx="366" cy="324" rx="14" ry="8" transform="rotate(25 366 324)" fill="#d5e2e8" strokeWidth="2" />
    {/* deck */}
    <path d="M360 366L778 124L765 67L962 336L955 354L882 402L868 406L830 440L780 462L700 505L620 550L540 582L524 606L508 606L484 580Z" fill="url(#panel)" />
    <path d="M360 366L484 590" strokeWidth="4" />
    <path d="M372 388L488 596" strokeWidth="2" />
    <path d="M752 184L790 190L836 176L846 190L838 210L800 218L784 224L770 200Z" fill="#93afbd" strokeWidth="2" />
    {[[433, 346], [492, 308], [554, 274], [617, 238], [680, 200], [740, 164]].map(([x, y], i) => (
      <rect key={x} x={x - (i ? 22 : 15)} y={y - 9} width={i ? 44 : 30} height="18" rx="9" transform={`rotate(-28 ${x} ${y})`} fill="#6f91a3" strokeWidth="2" />
    ))}
    {bores.map(([x, y]) => (
      <g key={`${x}-${y}`} strokeWidth="2">
        <ellipse cx={x} cy={y} rx="53" ry="50" fill="#dbe6eb" />
        <ellipse cx={x} cy={y - 1} rx="50" ry="46" transform={`rotate(20 ${x} ${y})`} fill="url(#metal)" />
        <path d={`M${x - 46} ${y + 22}Q${x - 10} ${y + 58} ${x + 38} ${y + 34}`} fill="none" stroke="#51748a" strokeWidth="4" />
      </g>
    ))}
    {[[514, 341], [640, 267], [766, 196]].map(([x, y]) => <circle key={x} cx={x} cy={y} r="18" fill="url(#metal)" strokeWidth="2" />)}
    {[[402, 388], [480, 344], [606, 268], [655, 240], [733, 194], [528, 314], [540, 436], [478, 476], [602, 402], [668, 366], [730, 328], [795, 290], [857, 254], [932, 341], [804, 412], [802, 433], [728, 460], [748, 464], [678, 488], [676, 507], [600, 532], [622, 538], [552, 560], [854, 387], [876, 390], [768, 154], [782, 168]].map(([x, y]) => <circle key={`${x}-${y}`} cx={x} cy={y} r="8" fill="#e4edf1" strokeWidth="2" />)}
    {[[416, 388, 70], [418, 430, 60], [634, 408, 30], [762, 340, 60], [790, 320, 80], [916, 330, 100], [914, 290, 70], [890, 264, 30], [538, 468, 80], [668, 388, 80], [664, 484, 100], [792, 406, 100], [728, 444, 10], [600, 516, 10], [856, 370, 10], [546, 322, 90], [672, 246, 90], [604, 284, 5], [732, 208, 5], [478, 358, 5]].map(([x, y, a]) => (
      <rect key={`${x}-${y}`} x={x - 12} y={y - 4} width="24" height="8" rx="4" transform={`rotate(${a} ${x} ${y})`} fill="#5a7d90" strokeWidth="2" />
    ))}
    <rect x="474" y="494" width="48" height="54" rx="16" transform="rotate(-12 498 520)" fill="#a5bdc9" strokeWidth="2" />
    <circle cx="512" cy="532" r="19" fill="url(#metal)" strokeWidth="2" />
    {/* front face */}
    <path d="M126 408L150 392L250 345L300 322L360 366L492 600L432 640L250 600L196 540L136 408Z" fill="#93afbd" />
    <path d="M150 400L200 470M200 380L246 362L250 376L204 390ZM240 380L262 440L300 470M360 366L340 420L400 492" fill="none" strokeWidth="2" />
    <ellipse cx="292" cy="402" rx="37" ry="46" transform="rotate(-12 292 402)" fill="#c3d5dd" />
    <ellipse cx="296" cy="400" rx="30" ry="38" transform="rotate(-12 296 400)" fill="#668899" strokeWidth="2" />
    <path d="M264 398Q274 438 312 440Q290 428 282 396Z" fill="#eaf2f5" strokeWidth="2" />
    {[[180, 456], [190, 496], [226, 480], [440, 545]].map(([x, y]) => <Knob key={x} x={x} y={y} r={16} />)}
    {[[262, 490, 18], [322, 488, 20], [338, 526, 22], [384, 552, 23], [292, 484, 11], [374, 448, 15], [190, 560, 16], [262, 640, 15], [238, 576, 10], [344, 606, 9], [336, 452, 8], [358, 392, 7], [230, 362, 7], [398, 630, 9]].map(([x, y, r]) => <Boss key={`${x}-${y}`} x={x} y={y} r={r} />)}
    <path d="M372 470L388 462L408 488L398 492Z" fill="#42647a" strokeWidth="2" />
    <path d="M200 546L232 530L316 552L350 560L400 640L360 640L310 620L240 560Z" fill="#a9c0cb" strokeWidth="2" />
    <path d="M180 590L200 588L282 614L250 634L180 606Z" fill="#b9ccd6" strokeWidth="2" />
    <path d="M232 560L262 566L290 620L264 628Z" fill="#7b9bab" strokeWidth="2" />
    <ellipse cx="314" cy="600" rx="32" ry="38" transform="rotate(-12 314 600)" fill="#c3d5dd" />
    <ellipse cx="320" cy="600" rx="25" ry="33" transform="rotate(-12 320 600)" fill="#668899" strokeWidth="2" />
    <path d="M294 600Q302 632 334 634Q314 622 306 592Z" fill="#eaf2f5" strokeWidth="2" />
    <path d="M400 570Q430 560 440 590L432 640L408 630ZM460 560L490 606M440 590L470 570L484 604L450 630" fill="#7f9fae" strokeWidth="2" />
    <path d="M484 606L514 596L522 616L490 630Z" fill="#b9ccd6" strokeWidth="2" />
    <path d="M360 170V222" strokeWidth="3" />
  </g>
);

const App = () => {
  const [activeTab, setActiveTab] = useState("EPC");
  const [search, setSearch] = useState("");
  const [stock, setStock] = useState("out");
  const [selected, setSelected] = useState(0);

  return (
    <>
      <GlobalStyle />
      <Page>
        <Header>
          <Logo>
            <svg width="76" height="28" viewBox="0 0 76 28" fill="none" stroke="#000" strokeWidth="3">
              <circle cx="14" cy="14" r="12" />
              <circle cx="30" cy="14" r="12" />
              <circle cx="46" cy="14" r="12" />
              <circle cx="62" cy="14" r="12" />
            </svg>
            <span>Audi</span>
          </Logo>
          <HeaderMain>
            <Info>
              <Offer>ПРЕДЛОЖЕНИЕ FI</Offer>
              <Stock>
                <legend>НАЛИЧИЕ</legend>
                <Radios>
                  <label>
                    <input type="radio" name="stock" checked={stock === "in"} onChange={() => setStock("in")} />В
                  </label>
                  <label>
                    <input type="radio" name="stock" checked={stock === "out"} onChange={() => setStock("out")} />ИЗ
                  </label>
                </Radios>
              </Stock>
              <Order $width={180}>МАТЕРИАЛЬНЫЙ ЗАКАЗ</Order>
              <Order $width={197}>ЗАЯВКА НА СБОРНЫЙ ЗАКАЗ</Order>
            </Info>
            <Tabs>
              {tabs.map((tab) => (
                <Tab
                  key={tab.name}
                  type="button"
                  disabled={tab.disabled}
                  $active={activeTab === tab.name}
                  $width={tab.width}
                  onClick={() => setActiveTab(tab.name)}
                >
                  {tab.name}
                </Tab>
              ))}
            </Tabs>
          </HeaderMain>
          <Brand>
            <strong>ETKA</strong>
            <span>Parts Information</span>
          </Brand>
        </Header>

        <Controls>
          <Filters>
            <Field $width={189} $search>
              <label htmlFor="search">ПОИСК FI</label>
              <Box>
                <input id="search" type="text" value={search} onChange={(e) => setSearch(e.target.value)} />
                <Arrow />
              </Box>
            </Field>
            {filters.map((item) => (
              <Field key={item.id} $width={item.width}>
                <label htmlFor={item.id}>{item.label}</label>
                <Box>
                  <select id={item.id} defaultValue={item.value}>
                    <option>{item.value}</option>
                  </select>
                  <Arrow />
                </Box>
                {item.marked && <Marker />}
              </Field>
            ))}
          </Filters>
          <Tools>
            {toolGroups.map((group, i) => (
              <ToolGroup key={i} $columns={group.length / 2}>
                {group.map(([icon, title, disabled]) => (
                  <ToolButton key={icon} type="button" aria-label={title} disabled={disabled}>
                    <svg viewBox="3 3 105 72">{icons[icon]}</svg>
                  </ToolButton>
                ))}
              </ToolGroup>
            ))}
          </Tools>
        </Controls>

        <Main>
          <Viewer>
            <ViewBar>
              <Stub />
              <ViewButton icon="zoomIn" title="Увеличить" />
              <ViewButton icon="zoomOut" title="Уменьшить" disabled />
              <ViewButton icon="zoomArea" title="Область" />
              <ViewButton icon="zoomFull" title="Масштаб 100" disabled />
              <ViewButton icon="zoom" title="Лупа" />
              <Caption />
              <ViewButton icon="three" title="Объём" disabled />
              <ViewButton icon="split" title="Разделить" disabled wide />
              <ViewButton icon="panes" title="Окна" />
              <ViewButton icon="move" title="Сдвинуть" />
            </ViewBar>
            <Canvas>
              <svg width="406" height="650" viewBox="0 0 406 650">
                <Gradients />
                <FullEngine />
                <BareBlock />
                <Callout x="122" y="44">1</Callout>
                <Callout x="139" y="423">2</Callout>
              </svg>
            </Canvas>
          </Viewer>
          <Parts>
            <Table>
              <colgroup>
                <col style={{ width: 80 }} />
                <col style={{ width: 148 }} />
                <col style={{ width: 200 }} />
                <col />
                <col style={{ width: 29 }} />
                <col style={{ width: 193 }} />
              </colgroup>
              <thead>
                <tr>
                  <th>ПОЗ.</th>
                  <th>НОМЕР ДЕТАЛИ</th>
                  <th>НАИМЕНОВАНИЕ</th>
                  <th>ПРИМЕЧАНИЕ</th>
                  <th>ST</th>
                  <th>ВВОД ДАННЫХ ПО МОДЕЛИ</th>
                </tr>
              </thead>
              <tbody>
                {parts.map((part, i) => (
                  <Row key={i} $selected={selected === i} $tall={i === 0} onClick={() => setSelected(i)}>
                    <PosCell>{part.pos}</PosCell>
                    <NumberCell>{part.number}</NumberCell>
                    <td>{part.name}</td>
                    <td>{part.note.map((line) => <div key={line}>{line}</div>)}</td>
                    <td>{part.st}</td>
                    <td>{part.model.map((line) => <div key={line}>{line}</div>)}</td>
                  </Row>
                ))}
              </tbody>
            </Table>
          </Parts>
        </Main>

        <Footer>
          <Lexcom>LEX COM</Lexcom>
          {footerItems.map((item) => <span key={item}>{item}</span>)}
          <span>
            КАТ
            <b>675</b>
          </span>
        </Footer>
        <Strip><i /><i /></Strip>
      </Page>
    </>
  );
};

const GlobalStyle = createGlobalStyle`
  * {
    box-sizing: border-box;
  }
  body {
    margin: 0;
    background: #fff;
    color: #000;
    font-family: "Liberation Sans", Arial, sans-serif;
    font-size: 13px;
  }
  button, input, select {
    font: inherit;
    color: inherit;
    margin: 0;
  }
`;

const Page = styled.div`
  display: flex;
  flex-direction: column;
  min-height: 100vh;
  margin-right: 3px;
  padding-bottom: 8px;
  border-right: 1px solid #dcdcdc;
`;

const Header = styled.header`
  display: flex;
  height: 99px;
  border-top: 4px solid #17518b;
  border-bottom: 1px solid #54585a;
`;

const Logo = styled.div`
  display: flex;
  flex-direction: column;
  width: 158px;
  padding: 23px 0 0 13px;

  span {
    padding: 3px 0 0 4px;
    color: #b3163b;
    font: 600 14px/16px Inter, sans-serif;
  }
`;

const HeaderMain = styled.div`
  display: flex;
  flex: 1;
  flex-direction: column;
  justify-content: space-between;
  font-family: Roboto, sans-serif;
  font-size: 12px;
`;

const Info = styled.div`
  display: flex;
  padding: 15px 0 0 9px;
  line-height: 16px;
`;

const Offer = styled.span`
  flex: 1;
`;

const Stock = styled.fieldset`
  width: 190px;
  margin: 0;
  padding: 0;
  border: 0;

  legend {
    padding: 0;
    line-height: 15px;
  }
`;

const Radios = styled.div`
  display: flex;
  line-height: 12px;
  color: #9a9a9a;

  label {
    display: flex;
    align-items: center;
    gap: 8px;
    width: 82px;
  }

  input {
    appearance: none;
    width: 11px;
    height: 11px;
    border: 2px solid #7c7c7c;
    border-radius: 50%;
  }

  input:checked {
    border-width: 1px;
    background: radial-gradient(circle, #666 0 3px, #fff 3px);
  }
`;

const Order = styled.span`
  width: ${(props) => props.$width}px;
`;

const Tabs = styled.nav`
  display: flex;
  align-items: flex-end;
  gap: 4px;
  margin-bottom: -1px;
`;

const Tab = styled.button`
  width: ${(props) => props.$width}px;
  height: 25px;
  padding: 4px 0 0;
  border: 1px solid #54585a;
  border-radius: 6px 6px 0 0;
  background: linear-gradient(#f2f2f2 20px, #dcdcdc);
  font-size: 13px;
  font-weight: bold;
  white-space: nowrap;

  &:disabled {
    color: #a9acae;
  }

  ${(props) => props.$active && css`
    height: 29px;
    padding: 0 0 2px;
    border-bottom-color: #fff;
    background: #fff;
  `}
`;

const Brand = styled.div`
  display: flex;
  flex-direction: column;
  width: 127px;
  padding-top: 29px;
  color: #4d5255;
  font-family: Roboto, sans-serif;
  white-space: nowrap;

  strong {
    font-size: 45px;
    line-height: 36px;
    font-weight: 900;
  }

  span {
    font-family: Lato, sans-serif;
    font-size: 14px;
    line-height: 18px;
    font-weight: 900;
  }
`;

const Controls = styled.div`
  display: flex;
  justify-content: space-between;
  align-items: flex-start;
  height: 75px;
  padding: 8px 16px 0 6px;
`;

const Filters = styled.div`
  display: flex;
  gap: 6px;
  padding-top: 9px;
  font-family: Roboto, sans-serif;
  font-size: 12px;
`;

const Field = styled.div`
  position: relative;
  width: ${(props) => props.$width}px;
  margin-right: ${(props) => (props.$search ? 3 : 0)}px;

  label {
    display: block;
    padding-left: 2px;
    line-height: 15px;
    white-space: nowrap;
  }
`;

const Box = styled.div`
  display: flex;
  height: 19px;
  border: 1px solid #54585a;

  input, select {
    appearance: none;
    flex: 1;
    min-width: 0;
    padding: 0 0 2px 5px;
    border: 0;
    outline: 0;
    background: transparent;
    font-weight: bold;
  }
`;

const Arrow = styled.span`
  display: flex;
  align-items: center;
  justify-content: center;
  width: 17px;
  margin: 1px;
  background: #4d5255;
  pointer-events: none;

  &::after {
    content: "";
    border: 4px solid transparent;
    border-top-color: #fff;
    border-bottom: 0;
  }
`;

/* red pencil ring around the model field */
const Marker = styled.span`
  position: absolute;
  top: -15px;
  left: -24px;
  width: 90px;
  height: 72px;
  border: 9px solid #ed1c24;
  border-radius: 50%;
  pointer-events: none;
`;

const Tools = styled.div`
  display: flex;
  gap: 19px;
`;

const ToolGroup = styled.div`
  display: grid;
  grid-template-columns: repeat(${(props) => props.$columns}, 37px);
  gap: 8px 6px;
`;

const ToolButton = styled.button`
  display: flex;
  height: 26px;
  padding: 0;
  border: 1px solid #4d5255;
  border-radius: 4px;
  background: #f2f2f2;
  color: #4d5255;

  svg {
    width: 35px;
    height: 24px;
  }

  &:disabled {
    border-color: #b4b6b7;
    color: #c2c4c5;
  }
`;

const Main = styled.main`
  display: flex;
  flex: 1;
`;

const Viewer = styled.section`
  display: flex;
  flex-direction: column;
  width: 1010px;
  flex-shrink: 0;
`;

const ViewBar = styled.div`
  display: flex;
  gap: 2px;
  height: 22px;
  border-right: 2px solid #000;
  padding-right: 2px;
`;

const Stub = styled.span`
  width: 4px;
  border: 1px solid #000;
  border-left: 0;
`;

const SquareButton = styled.button`
  display: flex;
  flex: none;
  width: ${(props) => (props.$wide ? 26 : 22)}px;
  padding: 0;
  border: 1px solid #54585a;
  background: #f5f5f5;
  color: #4d5255;

  svg {
    width: 100%;
    height: 20px;
  }

  &:disabled {
    border-color: #c4c6c7;
    color: #b0b3b4;
  }
`;

const Caption = styled.div`
  flex: 1;
  border: 1px solid #000;
  background: #f2f2f2;
`;

const Canvas = styled.div`
  display: flex;
  flex: 1;
  align-items: center;
  justify-content: center;
  padding-right: 4px;
`;

const Callout = styled.text`
  font: 12px "Liberation Sans", sans-serif;
  text-anchor: middle;
  fill: #222;
`;

const Parts = styled.section`
  flex: 1;
  padding: 0 0 0 2px;
`;

const Table = styled.table`
  width: 100%;
  table-layout: fixed;
  border-spacing: 0;
  font-weight: bold;
  line-height: 18px;
  text-align: left;

  th {
    height: 23px;
    padding: 1px 0 0 5px;
    border: solid #000;
    border-width: 1px 0;
    background: #eaeaea;
    line-height: 20px;
    white-space: nowrap;
  }

  th:first-child {
    border-left-width: 1px;
  }

  th:last-child {
    border-right-width: 1px;
  }

  td {
    padding: 0 0 0 5px;
    vertical-align: top;
  }
`;

const Row = styled.tr`
  height: ${(props) => (props.$tall ? 73 : 54)}px;

  td {
    border-bottom: 1px solid #b4b6b7;
    padding-top: 1px;
  }

  ${(props) => props.$selected && css`
    background: #f2f2f2;

    td {
      padding-top: 0;
      border: solid #54585a;
      border-width: 2px 0;
    }

    td:first-child {
      border-left-width: 2px;
    }

    td:last-child {
      border-right-width: 2px;
    }
  `}
`;

const PosCell = styled.td`
  && {
    padding-right: 36px;
    text-align: center;
  }
`;

const NumberCell = styled.td`
  font: 15px/18px "Liberation Mono", monospace;
  white-space: pre;
`;

const Footer = styled.footer`
  display: grid;
  grid-template-columns: 116px 240fr 270fr 113fr 103fr 240fr 302fr 199fr 268fr 62px;
  height: 33px;
  padding-top: 4px;
  border-bottom: 1px solid #33405c;
  background: #17518b;
  color: #fff;
  font-family: Roboto, sans-serif;
  font-size: 12px;
  line-height: 12px;

  b {
    display: block;
  }
`;

const Lexcom = styled.div`
  width: 24px;
  height: 26px;
  margin-left: 3px;
  padding-top: 6px;
  border: solid #fff;
  border-width: 1px 1px 0 1px;
  font-size: 10px;
  line-height: 10px;
  font-weight: bold;
`;

const Strip = styled.div`
  display: flex;
  gap: 3px;
  height: 1px;
  padding-left: 71px;
  background: #c5cbd6;

  i {
    width: 44px;
    background: #111;
  }
`;

export default App;
